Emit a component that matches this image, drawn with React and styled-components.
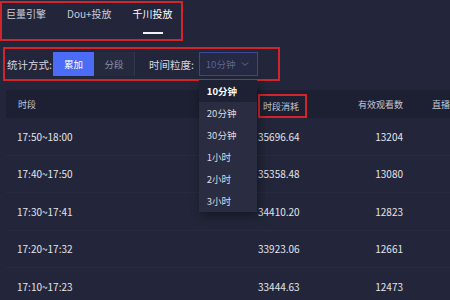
import React from "react";
import styled, { createGlobalStyle } from "styled-components";

const GlobalStyle = createGlobalStyle`
  html, body { margin: 0; padding: 0; background: #23263a; overflow: hidden; }
  body { font-family: "Noto Sans CJK SC", "Noto Sans", sans-serif; color: #e4e6ee; }
  * { box-sizing: border-box; }
`;

const Page = styled.div`
  width: 450px;
  min-height: 300px;
  display: flex;
  flex-direction: column;
  align-items: flex-start;
  padding-top: 1px;
  background: #23263a;
  position: relative;
  & > * { flex-shrink: 0; }
`;

const TabBox = styled.div`
  width: 183px;
  height: 40px;
  border: 2px solid #d0262b;
  display: flex;
  align-items: flex-start;
  gap: 21px;
  padding: 4px 0 0 4px;
`;

const Tab = styled.div`
  display: flex;
  flex-direction: column;
  align-items: center;
  font-size: 10px;
  line-height: 14px;
  color: ${(p) => (p.$active ? "#ffffff" : "#c9ccd8")};
  white-space: nowrap;
`;

const Underline = styled.div`
  width: 20px;
  height: 2px;
  margin-top: 11px;
  background: #f2f3f7;
`;

const FilterBox = styled.div`
  margin: 6px 0 0 3px;
  width: 277px;
  height: 34px;
  border: 2px solid #d0262b;
  display: flex;
  align-items: center;
  padding-left: 2px;
`;

const Label = styled.span`
  font-size: 10.5px;
  color: #d4d7e2;
  white-space: nowrap;
  margin-left: ${(p) => p.$ml || 0}px;
`;

const Seg = styled.div`
  display: flex;
  height: 24px;
  margin-left: 1px;
`;

const SegBtn = styled.div`
  width: 41px;
  height: 24px;
  display: flex;
  align-items: center;
  justify-content: center;
  font-size: 9.5px;
  color: ${(p) => (p.$active ? "#ffffff" : "#8b91aa")};
  background: ${(p) => (p.$active ? "#4a6cf7" : "#262a3e")};
  border-right: ${(p) => (p.$active ? "none" : "1px solid #33374e")};
`;

const SelectWrap = styled.div`
  position: relative;
  margin-left: 5px;
`;

const Select = styled.div`
  width: 59px;
  height: 24px;
  border: 1px solid #3a4796;
  background: #252944;
  display: flex;
  align-items: center;
  padding-left: 6px;
  gap: 6px;
  font-size: 9.5px;
  color: #5f6588;
`;

const Chevron = () => (
  <svg width="8" height="6" viewBox="0 0 8 6">
    <path d="M1 1.5 L4 4.5 L7 1.5" stroke="#6a7093" strokeWidth="1" fill="none" />
  </svg>
);

const Menu = styled.div`
  position: absolute;
  top: 28px;
  left: 0;
  width: 58px;
  background: #2a2d41;
  box-shadow: 2px 4px 10px rgba(0, 0, 0, 0.4);
  z-index: 10;
`;

const MenuItem = styled.div`
  height: 22px;
  display: flex;
  align-items: center;
  padding-left: 8px;
  font-size: 9.5px;
  font-weight: ${(p) => (p.$selected ? 700 : 400)};
  color: ${(p) => (p.$selected ? "#ffffff" : "#d8dbe5")};
  background: ${(p) => (p.$selected ? "#1e2133" : "transparent")};
`;

const Table = styled.div`
  margin: 9px 0 0 6px;
  width: 520px;
`;

const cols = "252px 82px 63px 29px 1fr";

const HeadRow = styled.div`
  display: grid;
  grid-template-columns: ${cols};
  height: 28px;
  background: #1d2032;
  align-items: center;
  font-size: 9px;
  color: #c3c7d3;
`;

const Row = styled.div`
  display: grid;
  grid-template-columns: ${cols};
  height: 37.5px;
  align-items: center;
  font-size: 10px;
  color: #e2e4ec;
  border-bottom: 1px solid #282b3f;
`;

const Cell = styled.div`
  white-space: nowrap;
  padding-left: ${(p) => p.$pl || 0}px;
  text-align: ${(p) => (p.$right ? "right" : "left")};
  grid-column: ${(p) => p.$col || "auto"};
`;

const MarkCell = styled.div`
  align-self: stretch;
  display: flex;
  align-items: flex-end;
`;

const MarkBox = styled.span`
  height: 24px;
  width: 49px;
  border: 2px solid #d0262b;
  display: flex;
  align-items: center;
  padding-left: 3px;
  white-space: nowrap;
`;

const rows = [
  ["17:50~18:00", "35696.64", "13204"],
  ["17:40~17:50", "35358.48", "13080"],
  ["17:30~17:41", "34410.20", "12823"],
  ["17:20~17:32", "33923.06", "12661"],
  ["17:10~17:23", "33444.63", "12473"],
];

const options = ["10分钟", "20分钟", "30分钟", "1小时", "2小时", "3小时"];

export default function App() {
  return (
    <>
      <GlobalStyle />
      <Page>
        <TabBox>
          <Tab>巨量引擎</Tab>
          <Tab>Dou+投放</Tab>
          <Tab $active>
            千川投放
            <Underline />
          </Tab>
        </TabBox>
        <FilterBox>
          <Label>统计方式:</Label>
          <Seg>
            <SegBtn $active>累加</SegBtn>
            <SegBtn>分段</SegBtn>
          </Seg>
          <Label $ml={14}>时间粒度:</Label>
          <SelectWrap>
            <Select>
              10分钟
              <Chevron />
            </Select>
            <Menu>
              {options.map((o, i) => (
                <MenuItem key={o} $selected={i === 0}>
                  {o}
                </MenuItem>
              ))}
            </Menu>
          </SelectWrap>
        </FilterBox>
        <Table>
          <HeadRow>
            <Cell $pl={12}>时段</Cell>
            <MarkCell>
              <MarkBox>时段消耗</MarkBox>
            </MarkCell>
            <Cell $right>有效观看数</Cell>
            <Cell $col={5}>直播间进入人数</Cell>
          </HeadRow>
          {rows.map((r) => (
            <Row key={r[0]}>
              <Cell $pl={11}>{r[0]}</Cell>
              <Cell>{r[1]}</Cell>
              <Cell $right>{r[2]}</Cell>
            </Row>
          ))}
        </Table>
      </Page>
    </>
  );
}
